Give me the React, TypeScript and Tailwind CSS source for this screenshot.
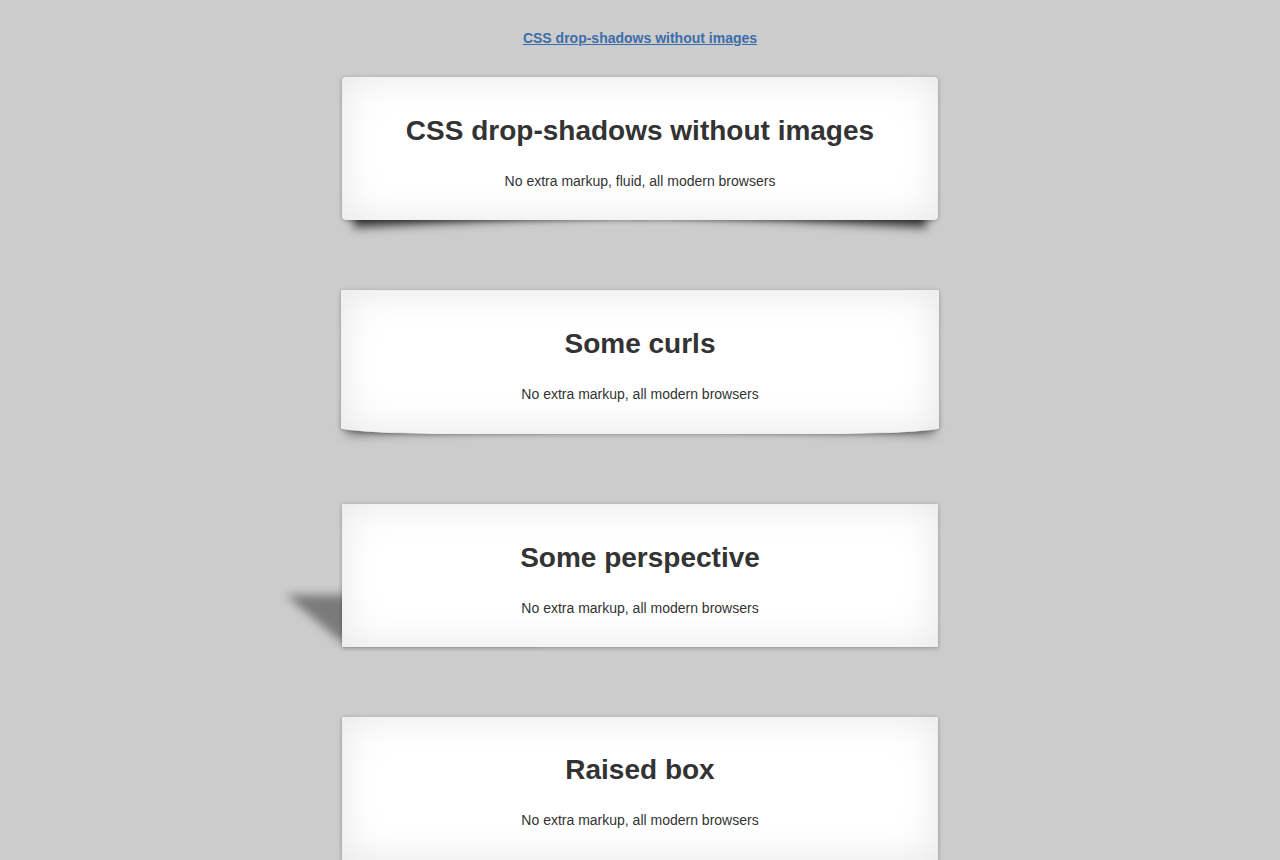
import type { ReactNode } from "react"

const base = "relative mx-auto flex flex-col items-center bg-white text-center"
const inset = "shadow-[0_1px_4px_rgba(0,0,0,0.3),inset_0_0_40px_rgba(0,0,0,0.1)]"

function Copy({ title, sub }: { title: string; sub: string }) {
  return (
    <>
      <h1 className="text-[28px] font-bold leading-[32px] text-[#333]">{title}</h1>
      <p className="mt-[24px] text-[14px] leading-[20px] text-[#333]">{sub}</p>
    </>
  )
}

function Lifted({ children }: { children: ReactNode }) {
  return (
    <div className={`${base} ${inset} h-[143px] w-[596px] rounded-[4px] pt-[38px]`}>
      {/* two tilted shadows under the corners */}
      <div className="absolute bottom-[15px] left-[10px] -z-10 h-[20%] w-1/2 max-w-[300px] shadow-[0_15px_10px_rgba(0,0,0,0.7)] [transform:rotate(-3deg)]" />
      <div className="absolute bottom-[15px] right-[10px] -z-10 h-[20%] w-1/2 max-w-[300px] shadow-[0_15px_10px_rgba(0,0,0,0.7)] [transform:rotate(3deg)]" />
      {children}
    </div>
  )
}

function Curled({ children }: { children: ReactNode }) {
  return (
    <div
      className={`${base} ${inset} h-[144px] w-[598px] rounded-[0_0_120px_120px/0_0_6px_6px] border border-[#efefef] pt-[37px]`}
    >
      <div className="absolute bottom-[12px] left-[10px] -z-10 h-[55%] w-1/2 max-w-[200px] shadow-[0_8px_12px_rgba(0,0,0,0.5)] [transform:skew(-8deg)_rotate(-3deg)]" />
      <div className="absolute bottom-[12px] right-[10px] -z-10 h-[55%] w-1/2 max-w-[200px] shadow-[0_8px_12px_rgba(0,0,0,0.5)] [transform:skew(8deg)_rotate(3deg)]" />
      {children}
    </div>
  )
}

function Perspective({ children }: { children: ReactNode }) {
  return (
    <div className={`${base} ${inset} h-[143px] w-[596px] pt-[38px]`}>
      {/* skewed shadow thrown to the left */}
      <div className="absolute bottom-[5px] left-[80px] -z-10 h-[33%] w-1/2 max-w-[200px] origin-bottom-left shadow-[-80px_0_8px_rgba(0,0,0,0.4)] [transform:skew(50deg)]" />
      {children}
    </div>
  )
}

function Raised({ children }: { children: ReactNode }) {
  return (
    <div
      className={`${base} h-[143px] w-[596px] pt-[37px] shadow-[0_15px_10px_-10px_rgba(0,0,0,0.5),0_1px_4px_rgba(0,0,0,0.3),inset_0_0_40px_rgba(0,0,0,0.1)]`}
    >
      {children}
    </div>
  )
}

export default function App() {
  const sub = "No extra markup, all modern browsers"
  return (
    <div className="isolate min-h-screen bg-[#ccc] pt-[28px] pb-[30px] text-center font-['Liberation_Sans',Arial,sans-serif] text-[14px] leading-[1.5] text-[#333]">
      <a href="#" className="text-[14px] font-bold text-[#3b6daa] underline">
        CSS drop-shadows without images
      </a>
      <div className="mt-[28px] flex flex-col gap-[70px]">
        <Lifted>
          <Copy title="CSS drop-shadows without images" sub="No extra markup, fluid, all modern browsers" />
        </Lifted>
        <Curled>
          <Copy title="Some curls" sub={sub} />
        </Curled>
        <Perspective>
          <Copy title="Some perspective" sub={sub} />
        </Perspective>
        <Raised>
          <Copy title="Raised box" sub={sub} />
        </Raised>
      </div>
    </div>
  )
}
